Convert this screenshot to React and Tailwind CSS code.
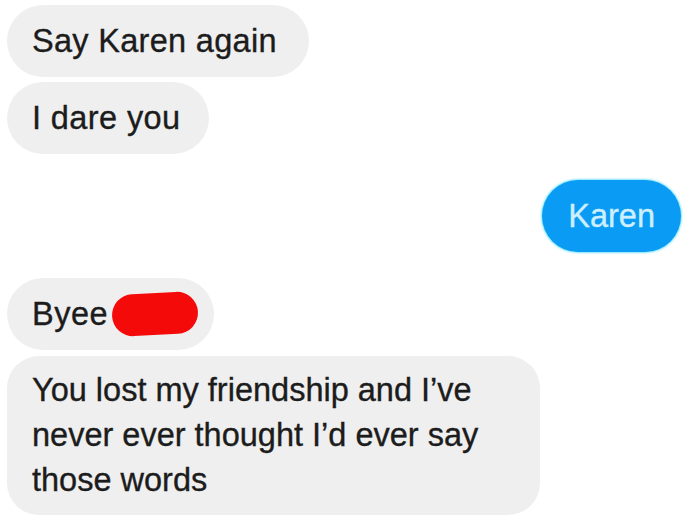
export default function App() {
  const grey = "bg-[#efefef] text-[#1c1c1c]";
  return (
    <div className="w-[700px] h-[532px] bg-white overflow-hidden font-['Liberation_Sans',Arial,sans-serif] text-[32.5px] leading-[45px] [-webkit-text-stroke:0.35px_currentColor]">
      <div className="flex flex-col items-start pl-[7px] pt-[5px]">
        <div className={`${grey} rounded-[36px] pl-[25px] pr-[32px] py-[13.5px] tracking-[0.3px]`}>Say Karen again</div>
        <div className={`${grey} rounded-[36px] pl-[25px] pr-[28px] py-[13.5px] mt-[5px] tracking-[0.4px]`}>I dare you</div>
      </div>
      <div className="flex justify-end pr-[19px] mt-[26px]">
        <div className="bg-[#0a9bf4] text-[#cdefff] rounded-[36px] px-[26px] py-[13.5px] shadow-[0_0_2px_1px_#7fe3ff]">Karen</div>
      </div>
      <div className="flex flex-col items-start pl-[7px] mt-[26px]">
        <div className={`${grey} rounded-[36px] pl-[25px] pr-[16px] py-[13.5px] flex items-center`}>
          <span className="tracking-[0.5px]">Byee</span>
          <span className="inline-block w-[86px] h-[42px] rounded-full bg-[#f50a0a] ml-[4px] -rotate-3"></span>
        </div>
        <div className={`${grey} rounded-[32px] pl-[25px] w-[533px] py-[12px] mt-[6px]`}>
          You lost my friendship and I’ve
          <br />
          never ever thought I’d ever say
          <br />
          those words
        </div>
      </div>
    </div>
  );
}
